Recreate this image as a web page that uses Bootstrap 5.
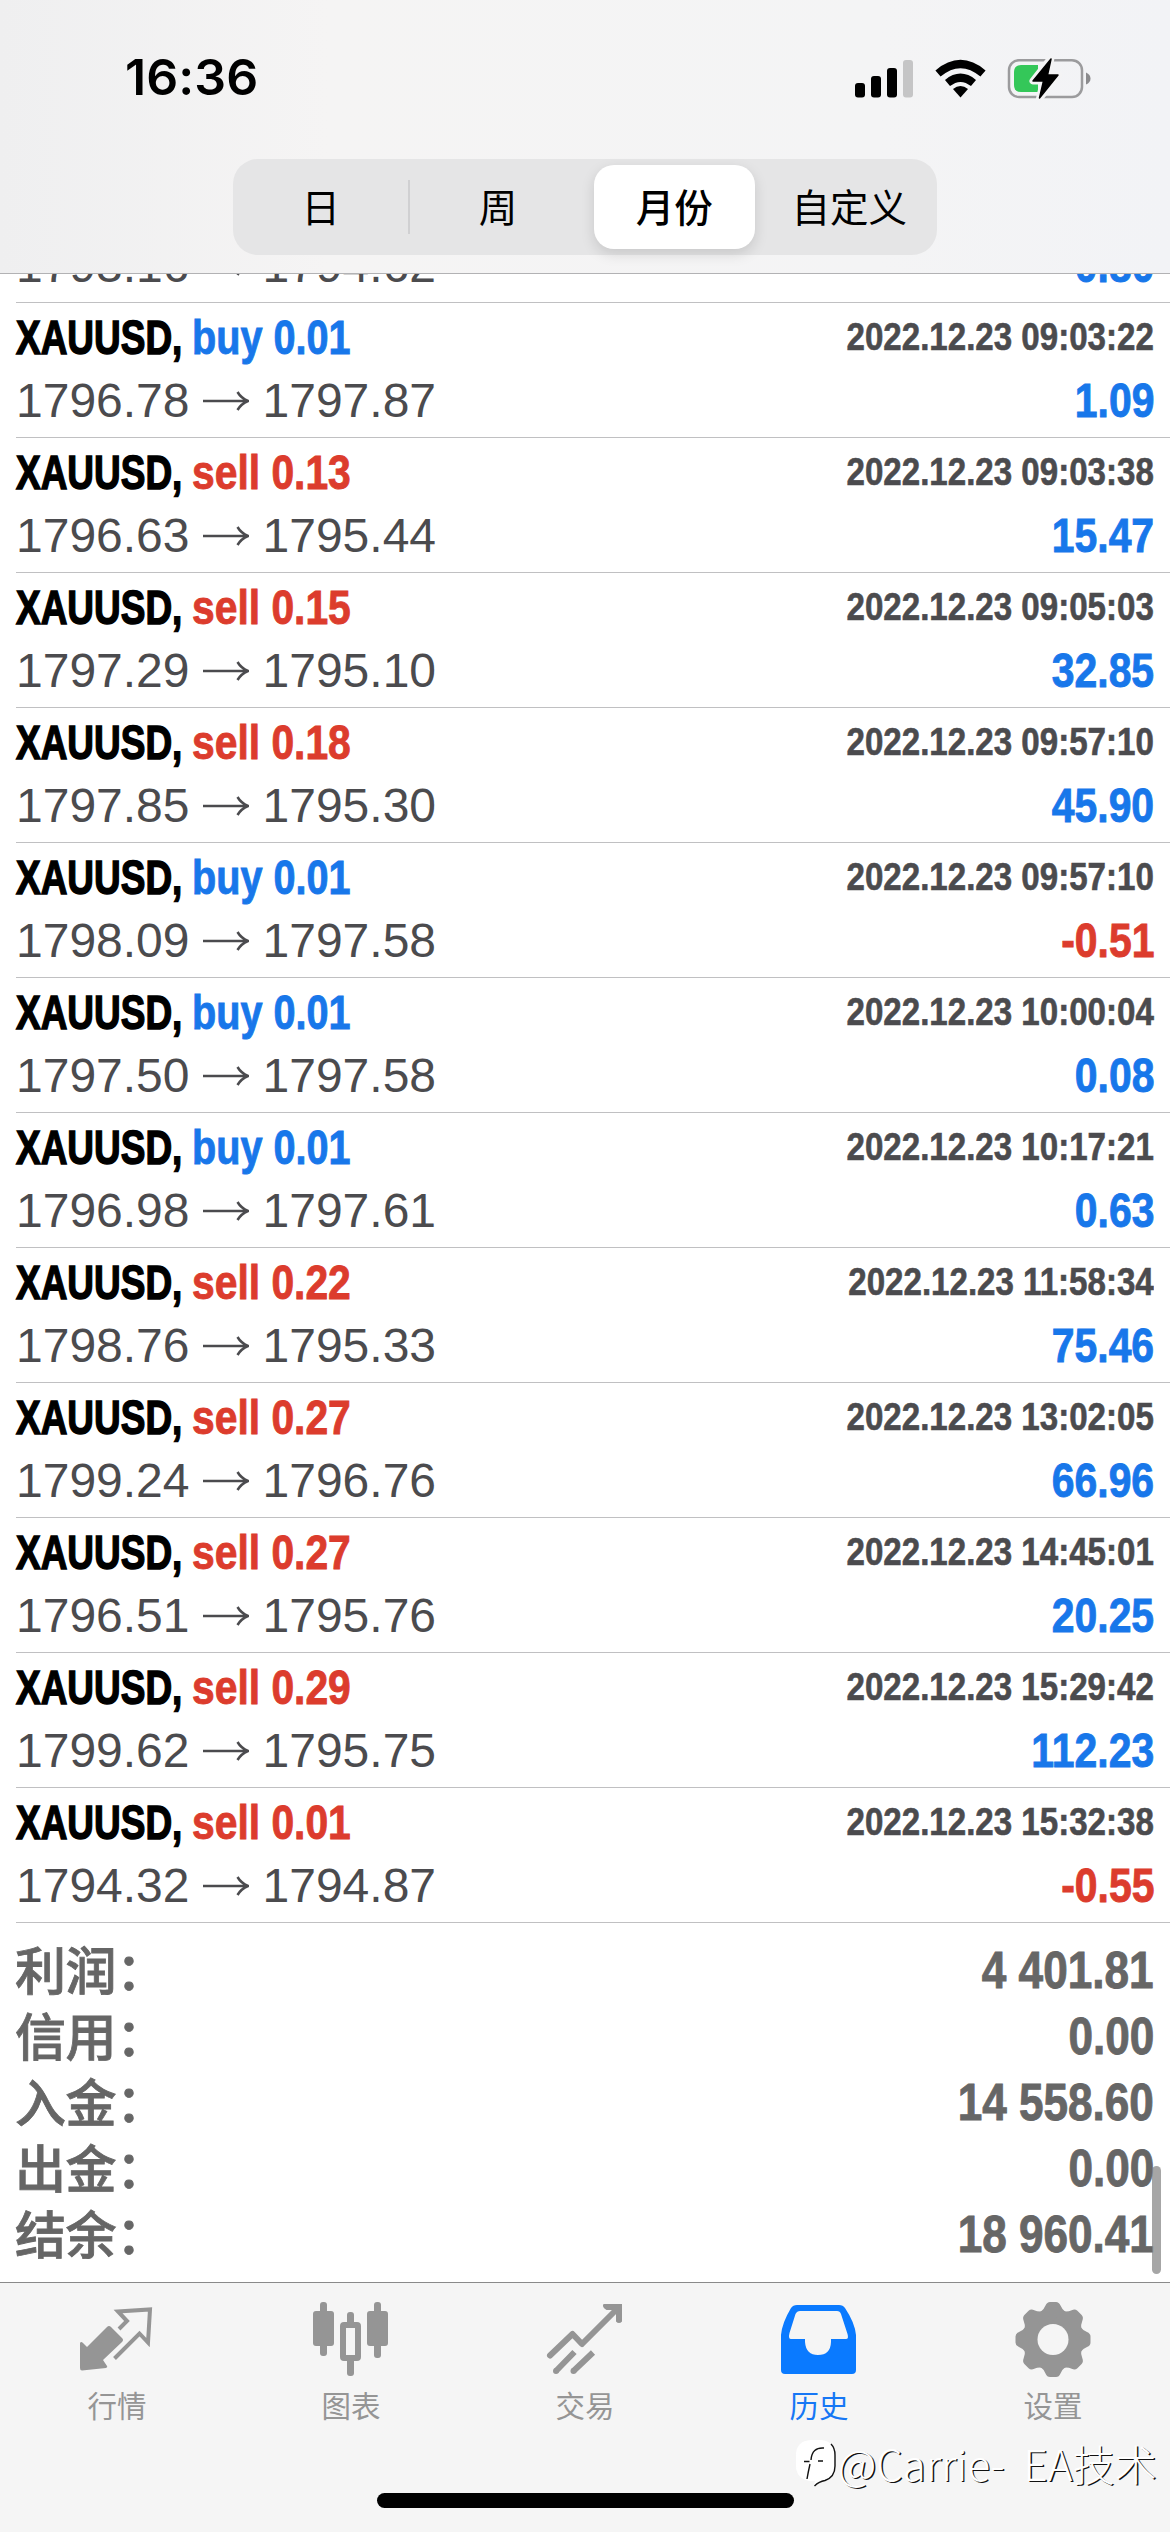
<!DOCTYPE html>
<html lang="zh-CN">
<head>
<meta charset="utf-8">
<meta name="viewport" content="width=device-width, initial-scale=1">
<title>历史</title>
<link rel="stylesheet" href="https://cdn.jsdelivr.net/npm/bootstrap@5.3.0/dist/css/bootstrap.min.css">
<style>
  body { width: 1170px; height: 2532px; overflow: hidden; background: #fff; font-family: "Liberation Sans", "Noto Sans CJK SC", sans-serif; }
  .top-area { height: 274px; border-bottom: 1px solid #b2b2b4; background: linear-gradient(90deg, #efeff0 0, #f5f4f4 28%, #f4f4f5 75%, #f2f3f6 100%); }
  .status { height: 159px; padding: 57px 79px 0 125px; }
  .clock { font: 600 50px/41px Inter, sans-serif; letter-spacing: .1px; color: #000; }
  .segments { width: 704px; height: 96px; border-radius: 25px; background: #e5e5e6; font-family: "Noto Sans CJK SC", sans-serif; font-size: 38.5px; color: #000; }
  .segments > button { flex: 1 1 0; border: 0; background: none; padding: 0 0 3px; color: #000; }
  .segments > button.picked { margin: 6px 7px 6px 8px; flex: 0 0 161px; border-radius: 20px; background: #fff; box-shadow: 0 5px 14px rgba(0,0,0,.13); font-weight: 500; }
  .split { width: 2px; height: 54px; background: #d0d0d2; }
  .deals { height: 2008px; overflow: hidden; position: relative; }
  .deal { height: 135px; flex: none; margin-left: 16px; padding-right: 16px; border-bottom: 1px solid #c0c0c2; color: #4b4b4e; font-size: 48px; }
  .head-line { height: 69px; line-height: 69px; }
  .price-line { height: 57px; line-height: 57px; }
  .squeeze { display: inline-block; font-weight: 700; transform-origin: left center; white-space: pre; -webkit-text-stroke: .9px currentColor; }
  .symbol-box { width: 176px; }
  .symbol { color: #000; transform: scaleX(.77); -webkit-text-stroke-width: 1.5px; }
  .side { transform: scaleX(.825); }
  .side.down { transform: scaleX(.85); }
  .stamp { font-size: 38px; transform: scaleX(.871); transform-origin: right center; -webkit-text-stroke-width: .6px; }
  .gain { transform: scaleX(.852); transform-origin: right center; }
  .price { letter-spacing: 0; }
  .up { color: #1877ea; }
  .down { color: #dc3c2d; }
  .arrow { width: 46px; height: 20px; margin: 0 14px 0 13px; }
  .totals { height: 359px; flex: none; padding: 15px 16px 0; color: #666; font-size: 51px; }
  .totals > div { height: 66px; line-height: 66px; }
  .total-name { font: 500 51px/60px "Noto Sans CJK SC", sans-serif; margin-left: -1px; letter-spacing: -.4px; -webkit-text-stroke: .8px currentColor; }
  .total-sum { transform: scaleX(.865); transform-origin: right center; }
  .scroll-thumb { position: absolute; left: 1152px; top: 1892px; width: 9px; height: 108px; border-radius: 5px; background: rgba(128,128,128,.7); }
  .tabs { height: 250px; background: #f5f5f5; border-top: 1px solid #8a8a8a; position: relative; }
  .tab-item { flex: 1 1 0; height: 160px; color: #959595; padding-top: 15px; font: 400 29.5px/44px "Noto Sans CJK SC", sans-serif; text-decoration: none; }
  .tab-item svg { width: 84px; height: 84px; }
  .tab-item.current { color: #1677f5; }
  .home-bar { position: absolute; left: 377px; top: 210px; width: 417px; height: 15px; border-radius: 8px; background: #000; }
  .credit { position: absolute; left: 794px; top: 151px; height: 60px; color: #fff; font: 300 42px/60px "Noto Sans CJK SC", sans-serif; letter-spacing: .15px; text-shadow: 1.4px 1.4px 0 #111; white-space: pre; }
  .credit svg { width: 44px; height: 50px; }
  .credit span { margin-top: -3px; }
</style>
</head>
<body>
<div class="d-flex flex-column">
  <header class="top-area">
    <div class="status d-flex justify-content-between align-items-start">
      <span class="clock">16:36</span>
      <svg width="237" height="43" viewBox="855 56 237 43" aria-hidden="true">
        <rect x="856" y="82" width="10" height="14.500" rx="3"/><rect x="872" y="75" width="10" height="21.500" rx="3"/><rect x="888" y="67" width="10" height="29.500" rx="3"/><rect x="904" y="59" width="10" height="37.500" rx="3" fill="#c5c5c6"/>
        <g fill="none" stroke="#000" stroke-width="8"><path d="M939 72.500Q961.500 53.500 984 72.500"/><path d="M948.500 82Q961.500 71.500 974.500 82"/></g>
        <path d="M954 88Q961.500 82 969 88L961.500 96.500Z"/>
        <rect x="1010" y="59.200" width="73" height="36.800" rx="10" fill="none" stroke="#9b9b9d" stroke-width="2.500"/>
        <path d="M1087 71.500Q1091.500 73.500 1091.500 77.500Q1091.500 81.500 1087 83.500Z" fill="#8b8b8d"/>
        <path d="M1022 64h17v27h-17q-7 0-7-7v-13q0-7 7-7Z" fill="#34c759"/>
        <path d="M1052 57L1034 80h10.500l-4 17.500L1059.500 74h-10.500Z" stroke="#f4f4f5" stroke-width="7" stroke-linejoin="round"/>
        <path d="M1052 58L1034 80h10.500l-4 17L1059 74h-10.500Z" stroke="#000" stroke-width="1.500" stroke-linejoin="round"/>
      </svg>
    </div>
    <div class="segments d-flex align-items-stretch mx-auto">
      <button type="button">日</button>
      <i class="split align-self-center"></i>
      <button type="button">周</button>
      <button type="button" class="picked">月份</button>
      <button type="button">自定义</button>
    </div>
  </header>

  <main class="deals d-flex flex-column justify-content-end">
    <div id="rows" class="d-flex flex-column"></div>
    <section class="totals">
      <div class="d-flex justify-content-between"><span class="total-name">利润：</span><span class="squeeze total-sum">4 401.81</span></div>
      <div class="d-flex justify-content-between"><span class="total-name">信用：</span><span class="squeeze total-sum">0.00</span></div>
      <div class="d-flex justify-content-between"><span class="total-name">入金：</span><span class="squeeze total-sum">14 558.60</span></div>
      <div class="d-flex justify-content-between"><span class="total-name">出金：</span><span class="squeeze total-sum">0.00</span></div>
      <div class="d-flex justify-content-between"><span class="total-name">结余：</span><span class="squeeze total-sum">18 960.41</span></div>
    </section>
    <span class="scroll-thumb"></span>
  </main>

  <nav class="tabs d-flex align-items-start">
    <a class="tab-item d-flex flex-column align-items-center">
      <svg viewBox="75 2298 84 84" fill="currentColor"><path d="M80 2343Q81 2341 83 2343L87 2347L107 2327Q109 2325 111 2327L122 2338Q124 2340 122 2342L103 2360L107 2366Q108 2367 106 2368L82 2370.500Q80 2370.500 80 2368Z"/><path d="M119 2329L127 2321L118 2311.500L150 2309.500L148 2342.500L139.500 2333.500L114.500 2358.500" fill="none" stroke="currentColor" stroke-width="4"/></svg>
      <span>行情</span>
    </a>
    <a class="tab-item d-flex flex-column align-items-center">
      <svg viewBox="309 2298 84 84" fill="currentColor"><rect x="313" y="2311" width="21" height="35" rx="3"/><rect x="320" y="2302" width="7" height="54" rx="3"/><rect x="367" y="2311" width="21" height="35" rx="3"/><rect x="374" y="2302" width="7" height="56" rx="3"/><rect x="347" y="2312" width="7" height="14" rx="3"/><rect x="347" y="2357" width="7" height="19" rx="3"/><rect x="343" y="2325" width="15" height="33" rx="1" fill="none" stroke="currentColor" stroke-width="6"/></svg>
      <span>图表</span>
    </a>
    <a class="tab-item d-flex flex-column align-items-center">
      <svg viewBox="543 2298 84 84" fill="none" stroke="currentColor" stroke-width="6"><path d="M550 2355.500L572.500 2334L582 2344L618 2308" stroke-linejoin="round" stroke-linecap="round"/><path d="M603.500 2304H622V2321.500Q619 2324.500 616 2321.500V2310H606.500Q601.500 2307 603.500 2304Z" fill="currentColor" stroke="none"/><path d="M556 2371L574.500 2352M573.500 2371L593 2352.500"/><g fill="currentColor" stroke="none"><circle cx="556" cy="2371" r="3"/><circle cx="573.500" cy="2371" r="3"/></g></svg>
      <span>交易</span>
    </a>
    <a class="tab-item current d-flex flex-column align-items-center">
      <svg viewBox="777 2298 84 84"><path fill="#0a7aff" fill-rule="evenodd" d="M781 2335Q782 2323 791 2308Q793 2305 797 2305H839Q843 2305 845 2308Q855 2323 856 2335V2370Q856 2374 852 2374H785Q781 2374 781 2370ZM800 2311Q797 2311 795.500 2314L789.500 2333Q788 2339 791 2339H805V2342Q806 2355 818 2355Q830.500 2355 831 2342V2339H846Q849 2339 847.500 2334L841 2314Q840 2311 837 2311Z"/></svg>
      <span>历史</span>
    </a>
    <a class="tab-item d-flex flex-column align-items-center">
      <svg viewBox="-42 -41.500 84 84"><g fill="currentColor"><circle r="30.500"/><g id="teeth"><path id="tooth" d="M-13-27Q-9-30-7.500-34Q-6-37.500-3-37.500H3Q6-37.500 7.500-34Q9-30 13-27V0H-13Z"/><use href="#tooth" transform="rotate(45)"/><use href="#tooth" transform="rotate(90)"/><use href="#tooth" transform="rotate(135)"/></g><use href="#teeth" transform="rotate(180)"/></g><circle r="15.500" fill="#f5f5f5"/></svg>
      <span>设置</span>
    </a>
    <span class="home-bar"></span>
    <div class="credit d-flex align-items-center">
      <svg viewBox="0 0 44 50"><path d="M2 16Q2 2 17 1H27Q40 2 40 15V27Q40 38 30 41Q24 43 20 46L21 42H15Q2 39 2 27Z" fill="#fff"/><path d="M37 5Q41 9 41 16V27Q41 38 31 41.500Q25 42.500 20.500 47" fill="none" stroke="#111" stroke-width="1.400"/><path d="M13 40Q14 34 16 25M10 22.500H15.500M17 21Q18 8 30 9M24 22H29" fill="none" stroke="#111" stroke-width="1.400"/></svg>
      <span>@Carrie-  EA技术</span>
    </div>
  </nav>
</div>

<script>
  const deals = [
    ["buy 0.01", "2022.12.23 09:03:05", "1793.16", "1794.62", "0.80"],
    ["buy 0.01", "2022.12.23 09:03:22", "1796.78", "1797.87", "1.09"],
    ["sell 0.13", "2022.12.23 09:03:38", "1796.63", "1795.44", "15.47"],
    ["sell 0.15", "2022.12.23 09:05:03", "1797.29", "1795.10", "32.85"],
    ["sell 0.18", "2022.12.23 09:57:10", "1797.85", "1795.30", "45.90"],
    ["buy 0.01", "2022.12.23 09:57:10", "1798.09", "1797.58", "-0.51"],
    ["buy 0.01", "2022.12.23 10:00:04", "1797.50", "1797.58", "0.08"],
    ["buy 0.01", "2022.12.23 10:17:21", "1796.98", "1797.61", "0.63"],
    ["sell 0.22", "2022.12.23 11:58:34", "1798.76", "1795.33", "75.46"],
    ["sell 0.27", "2022.12.23 13:02:05", "1799.24", "1796.76", "66.96"],
    ["sell 0.27", "2022.12.23 14:45:01", "1796.51", "1795.76", "20.25"],
    ["sell 0.29", "2022.12.23 15:29:42", "1799.62", "1795.75", "112.23"],
    ["sell 0.01", "2022.12.23 15:32:38", "1794.32", "1794.87", "-0.55"]
  ];
  // The oldest visible deal is scrolled half under the header: only its price line is rendered.
  document.getElementById("rows").innerHTML = deals.map(([side, time, open, close, gain], i) => `
    <article class="deal">
      <div class="head-line d-flex justify-content-between">${i === 0 ? "" : `
        <div class="d-flex"><div class="symbol-box"><span class="squeeze symbol">XAUUSD,</span></div><span class="squeeze side ${side[0] === "b" ? "up" : "down"}">${side}</span></div>
        <span class="squeeze stamp">${time}</span>`}
      </div>
      <div class="price-line d-flex justify-content-between">
        <div class="d-flex align-items-center"><span class="price">${open}</span><svg class="arrow" viewBox="0 0 46 20" fill="none" stroke="#4b4b4e" stroke-width="2.500"><path d="M0 10H44M34.500 1Q38 7 45 10Q38 13 34.500 19"/></svg><span class="price">${close}</span></div>
        <span class="squeeze gain ${gain[0] === "-" ? "down" : "up"}">${gain}</span>
      </div>
    </article>`).join("");
</script>
<script src="https://cdn.jsdelivr.net/npm/bootstrap@5.3.0/dist/js/bootstrap.bundle.min.js"></script>
</body>
</html>
